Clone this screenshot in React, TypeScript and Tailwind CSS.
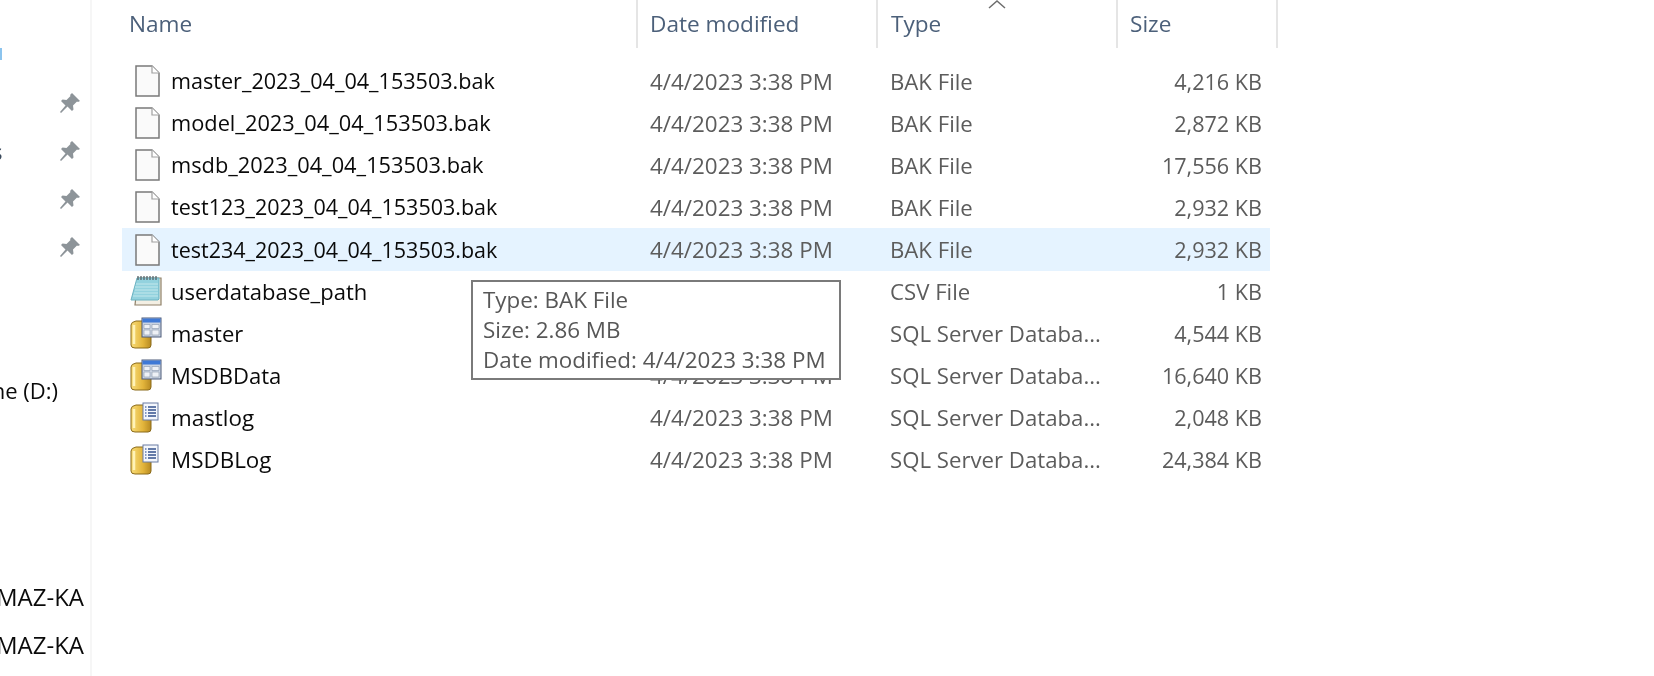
import React from "react";

type Kind = "file" | "note" | "data" | "log";

const files: { name: string; type: string; size: string; kind: Kind }[] = [
  { name: "master_2023_04_04_153503.bak", type: "BAK File", size: "4,216 KB", kind: "file" },
  { name: "model_2023_04_04_153503.bak", type: "BAK File", size: "2,872 KB", kind: "file" },
  { name: "msdb_2023_04_04_153503.bak", type: "BAK File", size: "17,556 KB", kind: "file" },
  { name: "test123_2023_04_04_153503.bak", type: "BAK File", size: "2,932 KB", kind: "file" },
  { name: "test234_2023_04_04_153503.bak", type: "BAK File", size: "2,932 KB", kind: "file" },
  { name: "userdatabase_path", type: "CSV File", size: "1 KB", kind: "note" },
  { name: "master", type: "SQL Server Databa...", size: "4,544 KB", kind: "data" },
  { name: "MSDBData", type: "SQL Server Databa...", size: "16,640 KB", kind: "data" },
  { name: "mastlog", type: "SQL Server Databa...", size: "2,048 KB", kind: "log" },
  { name: "MSDBLog", type: "SQL Server Databa...", size: "24,384 KB", kind: "log" },
];

const PinIcon = () => (
  <svg width="22" height="22" viewBox="0 0 22 22">
    <path d="M13 1l8 8-2 1-1-.5-4 4 .5 4-1.500 1.500-4.500-4.500L2 21l-1-1 5.500-6.500L2 9l1.500-1.500 4 .5 4-4L11 3z" fill="#8d9499" />
  </svg>
);

const FileIcon = () => (
  <svg width="25" height="32" viewBox="0 0 25 32">
    <path d="M1 1h16l7 7v23H1z" fill="#fafafa" stroke="#7a7a7a" strokeWidth="1.500" />
    <path d="M17 1v7h7" fill="#fff" stroke="#a0a0a0" strokeWidth="1.200" />
  </svg>
);

const NoteIcon = () => (
  <svg width="32" height="32" viewBox="0 0 32 32">
    <path d="M8 3h23v27H5z" fill="#f3efe4" stroke="#8f8068" strokeWidth="1.200" />
    <path d="M7 3h22v21l-1 1H1z" fill="#93d2de" stroke="#6db3c2" strokeWidth="1" />
    <path d="M6 9h22M5 12h23M5 15h23M4 18h24M3 21h25" stroke="#c3e8ec" strokeWidth="1" />
    <path d="M8 1v4M11 1v4M14 1v4M17 1v4M20 1v4M23 1v4M26 1v4" stroke="#56646a" strokeWidth="1.300" />
  </svg>
);

const Cylinder = () => (
  <>
    <path d="M1 8q0-3 5-4h12q3 0 3 3v21q0 3-3 3H5q-4 0-4-3z" fill="url(#dbGold)" stroke="#8a6a1a" strokeWidth="1" />
    <path d="M4 8v19" stroke="#fff3b8" strokeWidth="2.500" />
  </>
);

const DataIcon = () => (
  <svg width="32" height="32" viewBox="0 0 32 32">
    <defs>
      <linearGradient id="dbGold" x1="0" x2="1" y1="0" y2="0">
        <stop offset="0" stopColor="#f8dc78" />
        <stop offset="0.600" stopColor="#e3b53b" />
        <stop offset="1" stopColor="#b78a22" />
      </linearGradient>
    </defs>
    <Cylinder />
    <rect x="12" y="1" width="19" height="19" fill="#c9d3e2" stroke="#4c5a78" strokeWidth="1" />
    <rect x="12.500" y="1.500" width="18" height="4" fill="#3f79d6" />
    <path d="M14 7.500h6v4h-6zM22 7.500h7v4h-7zM14 13h6v5h-6zM22 13h7v5h-7z" fill="#eef1f6" stroke="#8a97ad" strokeWidth="0.600" />
  </svg>
);

const LogIcon = () => (
  <svg width="32" height="32" viewBox="0 0 32 32">
    <defs>
      <linearGradient id="dbGold" x1="0" x2="1" y1="0" y2="0">
        <stop offset="0" stopColor="#f8dc78" />
        <stop offset="0.600" stopColor="#e3b53b" />
        <stop offset="1" stopColor="#b78a22" />
      </linearGradient>
    </defs>
    <Cylinder />
    <rect x="13" y="2" width="15" height="17" fill="#f4f7fc" stroke="#6a7da3" strokeWidth="1" />
    <path d="M18 6h8M18 9h8M18 12h8M18 15h8" stroke="#33528c" strokeWidth="1.300" />
    <path d="M15 6h1.500M15 9h1.500M15 12h1.500M15 15h1.500" stroke="#5d7bb3" strokeWidth="1.300" />
  </svg>
);

const icons: Record<Kind, React.ReactNode> = {
  file: <FileIcon />,
  note: <NoteIcon />,
  data: <DataIcon />,
  log: <LogIcon />,
};

const nameSize = (name: string, kind: Kind) => {
  if (kind === "log") return "pt-[1px] text-[22.400px]";
  if (kind !== "file") return "";
  if (name.startsWith("test")) return "pt-[1px] text-[21.500px]";
  return name.startsWith("master") ? "pt-[1px] text-[21.600px]" : "pt-[1px] text-[21.800px]";
};

const App = () => {
  return (
    <div
      className="flex h-[676px] w-[1654px] overflow-hidden bg-white text-[22px] text-[#0a0a0a] blur-[0.4px]"
      style={{ fontFamily: '"Open Sans", "Noto Sans", sans-serif' }}
    >
      {/* Nav pane, cut off on the left */}
      <div className="flex w-[92px] shrink-0 flex-col border-r-2 border-[#f6f6f6] pt-[31px]">
        <div className="flex h-[48px] items-center"><span className="ml-[-1px] mt-[-2px] h-[12px] w-[3px] bg-[#8cc4ee]" /></div>
        <div className="flex h-[48px] items-center justify-end pr-[9px]"><PinIcon /></div>
        <div className="flex h-[48px] items-center justify-between pr-[9px]"><span className="ml-[-8px] text-[#3b4a5c]">s</span><PinIcon /></div>
        <div className="flex h-[48px] items-center justify-end pr-[9px]"><PinIcon /></div>
        <div className="flex h-[48px] items-center justify-end pr-[9px]"><PinIcon /></div>
        <div className="h-[95px]" />
        <div className="flex h-[48px] items-center justify-end overflow-hidden pr-[32px] whitespace-nowrap">ne (D:)</div>
        <div className="h-[159px]" />
        <div className="flex h-[48px] items-center justify-end overflow-hidden pr-[6px] text-[24px] whitespace-nowrap">MAZ-KA</div>
        <div className="flex h-[48px] items-center justify-end overflow-hidden pr-[6px] text-[24px] whitespace-nowrap">MAZ-KA</div>
      </div>

      {/* File list */}
      <div className="relative flex-1">
        <div className="relative flex h-[48px] w-[1186px] pl-[2px] text-[22.600px] text-[#4c607a]">
          <div className="flex w-[544px] items-center border-r-2 border-[#e5e5e5] pb-[1px] pl-[35px]">Name</div>
          <div className="flex w-[240px] items-center border-r-2 border-[#e5e5e5] pb-[1px] pl-[12px]">Date modified</div>
          <div className="flex w-[240px] items-center border-r-2 border-[#e5e5e5] pb-[1px] pl-[13px]">Type</div>
          <div className="flex w-[160px] items-center border-r-2 border-[#e5e5e5] pb-[1px] pl-[12px]">Size</div>
          <svg className="absolute left-[895px] top-0" width="20" height="10" viewBox="0 0 20 10">
            <path d="M2 8l8-7 8 7" fill="none" stroke="#6d6d6d" strokeWidth="1.500" />
          </svg>
        </div>

        <div className="ml-[30px] mt-[12px] flex w-[1148px] flex-col">
          {files.map((file, i) => (
            <div key={file.name} className={`flex items-center ${i === 4 ? "mb-[-1px] h-[43px] bg-[#e5f3ff]" : "h-[42px]"}`}>
              <div className="flex w-[515px] items-center">
                <div className={`flex w-[49px] shrink-0 justify-center ${file.kind === "file" ? "pl-[2px]" : "pr-[1px]"}`}>{icons[file.kind]}</div>
                <span className={`whitespace-nowrap ${nameSize(file.name, file.kind)}`}>{file.name}</span>
              </div>
              <div className="w-[240px] pl-[13px] pt-[1px] text-[22.400px] whitespace-nowrap text-[#5c5c5c]">4/4/2023 3:38 PM</div>
              <div className="w-[240px] pl-[13px] pt-[1px] text-[22.200px] whitespace-nowrap text-[#5c5c5c]">{file.type}</div>
              <div className="flex-1 pr-[8px] pt-[2px] text-right text-[21.600px] whitespace-nowrap text-[#5c5c5c]">{file.size}</div>
            </div>
          ))}
        </div>

        {/* Tooltip */}
        <div className="absolute left-[379px] top-[280px] flex h-[100px] w-[370px] flex-col justify-center border-2 border-[#7a7a7a] bg-white pl-[10px] text-[22.400px] text-[#575757]">
          <div className="leading-[30px]">Type: BAK File</div>
          <div className="leading-[30px]">Size: 2.86 MB</div>
          <div className="leading-[30px] whitespace-nowrap">Date modified: 4/4/2023 3:38 PM</div>
        </div>
      </div>
    </div>
  );
};

export default App;
